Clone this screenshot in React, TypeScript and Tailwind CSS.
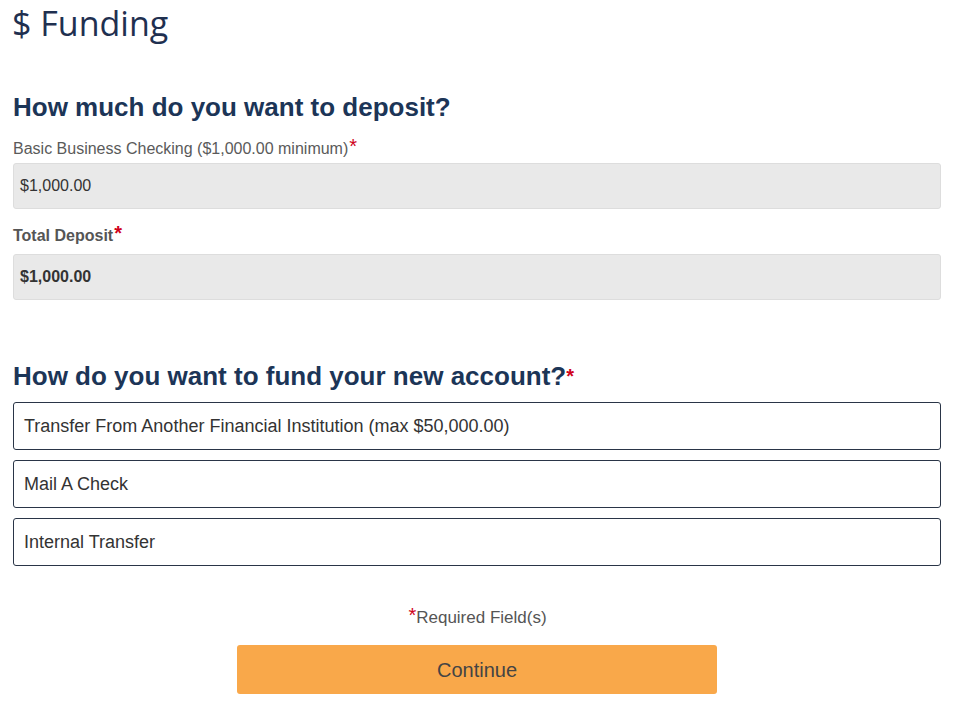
import React from "react";

const Star = () => <sup className="text-[#d0021b] text-[20px] relative -top-[1px] ml-[1px]">*</sup>;

export default function App() {
  return (
    <div className="w-[972px] h-[704px] bg-white overflow-hidden pl-[13px] pr-[31px]" style={{ fontFamily: '"Liberation Sans", Arial, sans-serif' }}>
      <h1 className="text-[34px] leading-[46px] text-[#1f3050] -ml-[1px]" style={{ fontFamily: '"Open Sans", "Noto Sans", sans-serif' }}>$ Funding</h1>

      <h2 className="mt-[46px] text-[26px] leading-[30px] font-bold text-[#1c3557]">How much do you want to deposit?</h2>
      <div className="mt-[16px] text-[16px] leading-[22px] text-[#5a5a5a]">Basic Business Checking ($1,000.00 minimum)<Star /></div>
      <div className="mt-[3px] h-[46px] rounded-[3px] border border-[#ddd] bg-[#e9e9e9] flex items-center px-[6px] text-[16px] text-[#333]">$1,000.00</div>
      <div className="mt-[16px] text-[16px] leading-[22px] font-bold text-[#555]">Total Deposit<Star /></div>
      <div className="mt-[7px] h-[46px] rounded-[3px] border border-[#ddd] bg-[#e9e9e9] flex items-center px-[6px] text-[16px] font-bold text-[#333]">$1,000.00</div>

      <h2 className="mt-[61px] text-[26px] leading-[30px] font-bold text-[#1c3557]">How do you want to fund your new account?<span className="text-[#d0021b] text-[20px] align-top">*</span></h2>
      <div className="mt-[11px] flex flex-col gap-[10px]">
        {["Transfer From Another Financial Institution (max $50,000.00)", "Mail A Check", "Internal Transfer"].map((t) => (
          <div key={t} className="h-[48px] rounded-[3px] border border-[#2a3547] flex items-center px-[10px] text-[18px] text-[#333]">{t}</div>
        ))}
      </div>

      <div className="mt-[41px] text-center text-[17px] leading-[22px] text-[#555]"><Star />Required Field(s)</div>
      <div className="mt-[16px] flex justify-center">
        <button className="w-[480px] h-[49px] rounded-[3px] bg-[#f9a84a] text-[20px] text-[#444]">Continue</button>
      </div>
    </div>
  );
}
